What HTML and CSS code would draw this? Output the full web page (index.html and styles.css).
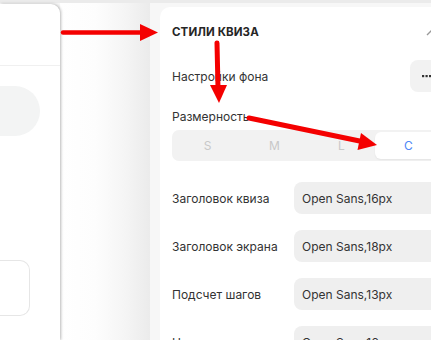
FILE: index.html
```html
<!DOCTYPE html>
<html lang="ru">
<head>
<meta charset="utf-8">
<link rel="stylesheet" href="styles.css">
</head>
<body>
<div class="page">
  <aside class="left">
    <div class="left-head"></div>
    <div class="left-pill"></div>
    <div class="left-box"></div>
  </aside>
  <div class="gap"></div>
  <main class="right">
    <section class="card">
      <header class="card-head">
        <h2 class="title">СТИЛИ КВИЗА</h2>
        <svg class="chev" width="10" height="6" viewBox="0 0 10 6"><path d="M1 5 L5 1 L9 5" fill="none" stroke="#999" stroke-width="1.4"/></svg>
      </header>
      <div class="row">
        <span class="label">Настройки фона</span>
        <button class="more" aria-label="Ещё"><svg width="12" height="4" viewBox="0 0 12 4"><rect x="0" y="1" width="2.2" height="2.2" fill="#333"/><rect x="3.5" y="1" width="2.2" height="2.2" fill="#333"/><rect x="7" y="1" width="2.2" height="2.2" fill="#333"/></svg></button>
      </div>
      <div class="size-label">Размерность</div>
      <div class="seg">
        <span class="seg-item">S</span>
        <span class="seg-item">M</span>
        <span class="seg-item">L</span>
        <span class="seg-item active">С</span>
      </div>
      <div class="fields">
        <div class="row">
          <span class="label">Заголовок квиза</span>
          <div class="input">Open Sans,16px</div>
        </div>
        <div class="row">
          <span class="label">Заголовок экрана</span>
          <div class="input">Open Sans,18px</div>
        </div>
        <div class="row">
          <span class="label">Подсчет шагов</span>
          <div class="input">Open Sans,13px</div>
        </div>
        <div class="row">
          <span class="label">Названия</span>
          <div class="input">Open Sans,16px</div>
        </div>
      </div>
    </section>
  </main>
  <svg class="arrows" width="431" height="340" viewBox="0 0 431 340">
    <g fill="#f40000" stroke="#f40000">
      <line x1="63" y1="32.5" x2="143" y2="32.5" stroke-width="4.5" stroke-linecap="round"/>
      <polygon points="140,24 158,32.5 140,41" stroke="none"/>
      <line x1="217" y1="43" x2="218" y2="88" stroke-width="5" stroke-linecap="round"/>
      <polygon points="210,85 227,85 219,103" stroke="none"/>
      <line x1="249" y1="118" x2="362" y2="141.5" stroke-width="5" stroke-linecap="round"/>
      <polygon points="361,133 377,145 357.5,150" stroke="none"/>
    </g>
  </svg>
</div>
</body>
</html>
```

FILE: styles.css
```css
* { box-sizing: border-box; }
html, body {
  margin: 0;
  padding: 0;
  width: 431px;
  height: 340px;
  overflow: hidden;
  background: #f6f6f6;
  font-family: Inter, "Noto Sans", sans-serif;
}
.page {
  position: relative;
  display: flex;
  width: 431px;
  height: 340px;
  border-top: 3px solid #ebebeb;
}
.left {
  flex: 0 0 60px;
  margin-top: 1px;
  background: #fff;
  border-top-right-radius: 9px;
  box-shadow: 1px 0 3px rgba(0,0,0,0.28);
  position: relative;
  z-index: 1;
}
.left-head {
  height: 62px;
  border-bottom: 1px solid #f0f0f0;
}
.left-pill {
  margin-top: 20px;
  width: 40px;
  height: 50px;
  background: #f3f4f4;
  border-radius: 0 25px 25px 0;
}
.left-box {
  margin-top: 124px;
  width: 30px;
  height: 56px;
  border: 1px solid #e6e6e6;
  border-left: none;
  border-radius: 0 10px 10px 0;
}
.gap {
  flex: 0 0 90px;
  background: linear-gradient(to right, #ffffff 0%, #fdfdfd 40%, #f4f4f4 75%, #ebebeb 100%);
}
.right {
  flex: 1;
  padding: 4px 0 0 10px;
  background: #f7f7f7;
  min-width: 0;
}
.card {
  width: 300px;
  height: 400px;
  background: #fff;
  border-top-left-radius: 10px;
  padding: 18px 0 0 12px;
}
.card-head {
  display: flex;
  align-items: center;
  justify-content: space-between;
  height: 14px;
  padding-right: 24px;
}
.title {
  margin: 0;
  font-size: 11.5px;
  font-weight: 700;
  color: #262626;
  letter-spacing: 0.1px;
}
.chev { margin-top: 2px; }
.row {
  display: flex;
  align-items: center;
  height: 32px;
}
.card-head + .row {
  margin-top: 21px;
  justify-content: space-between;
}
.label {
  flex: 0 0 122px;
  font-size: 12px;
  color: #333;
}
.more {
  display: flex;
  align-items: center;
  width: 38px;
  height: 32px;
  border: none;
  background: #f2f2f2;
  border-radius: 8px;
  padding: 0 0 0 12px;
  margin-left: auto;
  transform: translateX(-12px);
}
.size-label {
  margin-top: 18px;
  font-size: 12px;
  color: #333;
  height: 14px;
  line-height: 14px;
}
.seg {
  margin-top: 6px;
  display: flex;
  width: 272px;
  height: 31px;
  padding: 2px;
  background: #f2f2f2;
  border-radius: 7px;
}
.seg-item {
  flex: 1;
  display: flex;
  align-items: center;
  justify-content: center;
  font-size: 12px;
  color: #c8c8c8;
  border-radius: 6px;
}
.seg-item.active {
  background: #fff;
  color: #4f86f7;
  box-shadow: 0 1px 2px rgba(0,0,0,0.06);
}
.fields {
  margin-top: 21px;
  display: flex;
  flex-direction: column;
  gap: 16px;
}
.input {
  flex: 1;
  height: 32px;
  display: flex;
  align-items: center;
  padding-left: 8px;
  background: #efefef;
  border-radius: 8px;
  font-size: 12px;
  color: #333;
}
.arrows {
  position: absolute;
  left: 0;
  top: -3px;
  z-index: 5;
  pointer-events: none;
}
```
